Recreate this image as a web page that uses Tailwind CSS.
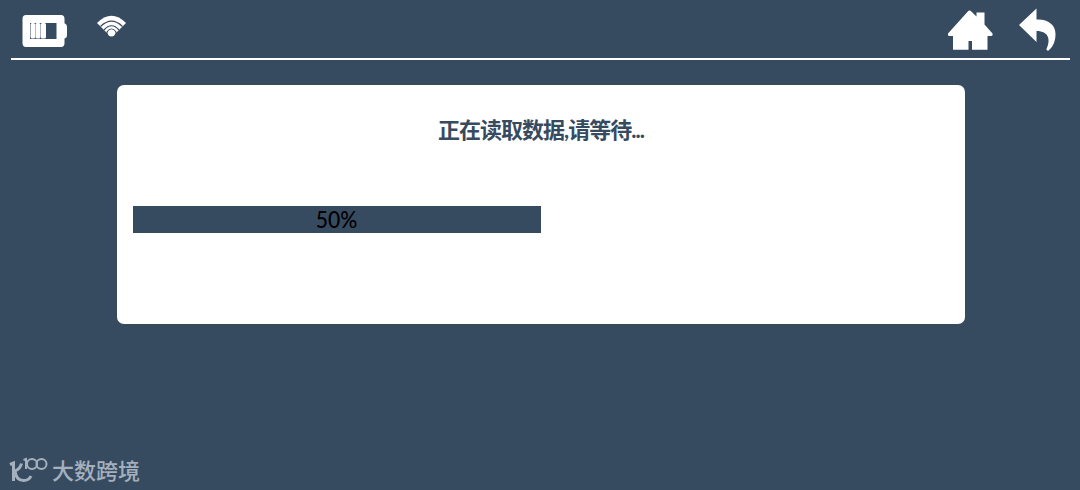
<!DOCTYPE html>
<html lang="zh-CN">
<head>
    <meta charset="UTF-8">
    <title>读取数据</title>
    <script src="https://cdn.jsdelivr.net/npm/@tailwindcss/browser@4"></script>
</head>
<body class="bg-[#374b60] h-screen overflow-hidden flex flex-col font-['Lato','Noto_Sans_CJK_SC',sans-serif]">
<!-- Header -->
<header class="ml-[11px] mr-[10px] h-[60px] shrink-0 border-b-2 border-white flex justify-between text-white">
    <div class="flex items-start">
        <svg class="ml-[11px] mt-[15px] w-[46px] h-8" viewBox="0 0 46 32" fill="currentColor">
            <path fill-rule="evenodd" d="M4 0H39Q42.500 0 42.500 4V8.500H43Q45 9 45 12V20Q45 23 42.500 23.500V28Q42.500 32 39 32H4Q.5 32 .5 28V4Q.5 0 4 0ZM8 8V24H34.500V8Z"/>
            <rect x="8.500" y="8" width="4.600" height="15.500" rx="1.500"/>
            <rect x="13.400" y="8" width="5" height="15.500" rx="1.500"/>
            <rect x="18.700" y="8" width="5.300" height="15.500" rx="1.500"/>
        </svg>
        <svg class="ml-[29px] mt-[15px] w-[29px] h-[22px]" viewBox="0 0 29 22" fill="none">
            <path d="M0 8Q14.500-6.500 29 8L17 20H12Z" fill="currentColor"/>
            <g stroke="#374b60" stroke-width="1.200">
                <path d="M3.500 11.500Q14.500.8 25.500 11.500"/>
                <path d="M7 15Q14.500 6.500 22 15"/>
                <path d="M10 18.500V17Q14.500 11 19 17V18.500"/>
            </g>
            <circle cx="14.500" cy="18" r="3.500" fill="currentColor"/>
        </svg>
    </div>
    <div class="flex items-start">
        <svg class="mt-[10px] w-[46px] h-10" viewBox="0 0 46 40" fill="currentColor">
            <path d="M21.500.8Q22.500 0 23.500.8L29.500 6.500V2.500H37.500V14.500L45.500 23.500Q46 26 44 26H40.500V39.800H25V31H21.500V39.800H6V26H2Q.5 26 1 23.500Z"/>
        </svg>
        <svg class="ml-[25px] mr-[13px] mt-2 w-[39px] h-[43px]" viewBox="0 0 39 43" fill="currentColor">
            <path d="M1 17L18.500.5V11.500C31 11 37.500 17.500 37.500 26C37.500 34 34.500 39.500 30 43L28.300 41.500C33 32 31 23 18.500 23V34Z"/>
        </svg>
    </div>
</header>

<!-- Loading card -->
<main class="ml-[117px] mt-[25px] w-[848px] h-[239px] bg-white rounded-[7px] px-4">
    <h1 class="pt-[30px] h-[121px] text-[22px] leading-[30px] tracking-[-1px] font-bold text-center text-[#374b60]">正在读取数据,请等待...</h1>
    <div class="h-[27px]">
        <div class="h-full bg-[#374b60] text-black text-center text-[23px] leading-[26px] font-medium" style="width: 50%">
            <span class="inline-block scale-x-92">50%</span>
        </div>
    </div>
</main>

<!-- Watermark -->
<footer class="mt-auto ml-2 mb-[5px] flex items-center gap-1 text-[#a4b0bd]">
    <svg class="w-10 h-7" viewBox="0 0 40 28" fill="none" stroke="currentColor" stroke-width="2">
        <path d="M2 7.500L5.500 6V24" stroke-width="3"/>
        <path d="M13.500 6.500Q12.500 11.500 7 14Q8 23.500 15.500 23.500Q21 23.500 23 19" stroke-width="3"/>
        <path d="M15.500 3L18 2V12"/>
        <circle cx="24" cy="7" r="5"/>
        <circle cx="33.500" cy="7" r="5"/>
    </svg>
    <span class="text-[22px] leading-7 font-medium">大数跨境</span>
</footer>
</body>
</html>
